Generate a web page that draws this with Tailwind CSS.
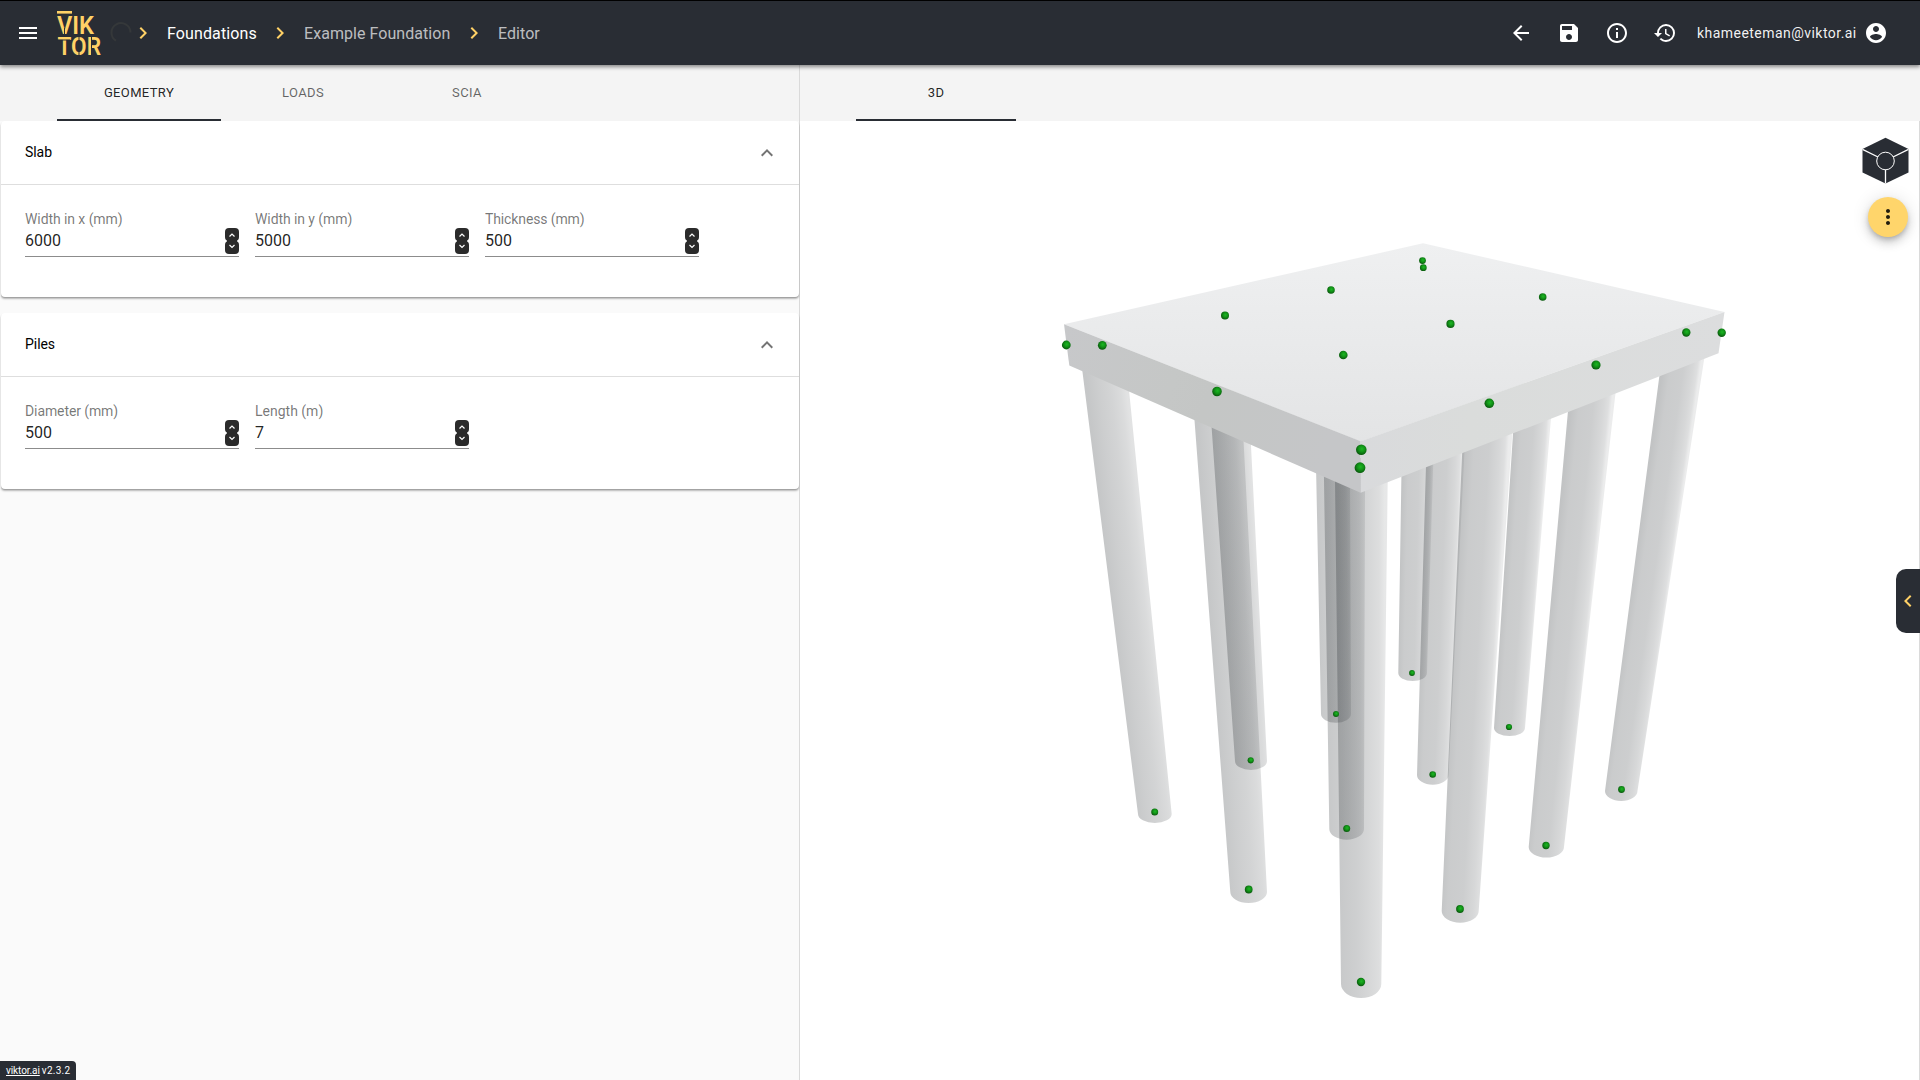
<!DOCTYPE html>
<html lang="en">
<head>
<meta charset="utf-8">
<title>VIKTOR - Editor</title>
<script src="https://cdn.jsdelivr.net/npm/@tailwindcss/browser@4"></script>
</head>
<body class="relative flex h-screen w-screen flex-col overflow-hidden bg-[#fafafa] font-['Roboto',sans-serif] text-black/87">

<svg class="hidden">
  <symbol id="chevron" viewBox="0 0 24 24"><path d="M10 6 8.59 7.41 13.17 12l-4.58 4.59L10 18l6-6z" fill="currentColor"/></symbol>
  <symbol id="expand" viewBox="0 0 24 24"><path d="m12 8-6 6 1.41 1.41L12 10.83l4.59 4.58L18 14z" fill="currentColor"/></symbol>
  <symbol id="spin" viewBox="0 0 14 26">
    <rect x="2" y="12" width="10" height="2" fill="#212121"/>
    <rect x="0" y="0" width="14" height="13" rx="4" fill="#2b2b2b"/>
    <rect x="0" y="13" width="14" height="13" rx="4" fill="#2b2b2b"/>
    <path d="M4.5 8.500 7 6l2.500 2.500M4.500 17 7 19.500 9.500 17" fill="none" stroke="#fff" stroke-width="1.200"/>
  </symbol>
</svg>

<header class="relative z-10 flex h-[65px] shrink-0 items-center border-t border-black bg-[#292d34] pl-4 pr-8 text-white shadow-[0_2px_4px_rgba(0,0,0,0.45)]">
  <svg class="size-6" viewBox="0 0 24 24" fill="currentColor"><path d="M3 18h18v-2H3zm0-5h18v-2H3zm0-7v2h18V6z"/></svg>
  <svg class="ml-4 h-[48px] w-12 overflow-visible" viewBox="0 0 48 48" fill="#ffd166" font-family="Roboto, sans-serif" font-weight="600" font-size="26.5">
    <rect x="1" y="2" width="15" height="2.600"/>
    <text x="1" y="25" textLength="37" lengthAdjust="spacingAndGlyphs">VIK</text>
    <text x="1.500" y="46" textLength="43.500" lengthAdjust="spacingAndGlyphs">TOR</text>
    <path d="M8.500 19v7M1 31h13M23 26v21M35.500 26v21" stroke="#292d34" stroke-width="1" fill="none"/>
  </svg>
  <svg class="ml-1.5 size-[22px]" viewBox="0 0 22 22"><path d="M6 18.700A9.500 9.500 0 1 1 20.500 10.500" fill="none" stroke="#35383a" stroke-width="2"/></svg>
  <nav class="flex items-center text-base">
    <svg class="-ml-px size-6 text-[#ffd166]"><use href="#chevron"/></svg>
    <span class="ml-3 w-[89px] whitespace-nowrap pt-0.5 tracking-[0.12px]">Foundations</span>
    <svg class="ml-3 size-6 text-[#ffd166]"><use href="#chevron"/></svg>
    <span class="ml-3 w-[146px] whitespace-nowrap pt-0.5 tracking-[0.05px] text-white/70">Example Foundation</span>
    <svg class="ml-3 size-6 text-[#ffd166]"><use href="#chevron"/></svg>
    <span class="ml-3 pt-0.5 tracking-[0.05px] text-white/70">Editor</span>
  </nav>
  <div class="ml-auto flex items-center gap-6">
    <svg class="size-6" viewBox="0 0 24 24" fill="currentColor"><path d="M20 11H7.83l5.59-5.59L12 4l-8 8 8 8 1.41-1.41L7.83 13H20z"/></svg>
    <svg class="size-6" viewBox="0 0 24 24" fill="currentColor"><path d="M17 3H5c-1.11 0-2 .9-2 2v14c0 1.1.89 2 2 2h14c1.1 0 2-.9 2-2V7zm-5 16c-1.66 0-3-1.34-3-3s1.34-3 3-3 3 1.34 3 3-1.34 3-3 3m3-10H5V5h10z"/></svg>
    <svg class="size-6" viewBox="0 0 24 24" fill="currentColor"><path d="M11 7h2v2h-2zm0 4h2v6h-2zm1-9C6.48 2 2 6.48 2 12s4.48 10 10 10 10-4.48 10-10S17.52 2 12 2m0 18c-4.41 0-8-3.59-8-8s3.59-8 8-8 8 3.59 8 8-3.59 8-8 8"/></svg>
    <svg class="size-6" viewBox="0 0 24 24" fill="currentColor"><g transform="translate(-.5)"><path d="M13.5 3a9 9 0 0 0-9 9h-3l3.9 3.9.1.1 4-4h-3c0-3.87 3.13-7 7-7s7 3.13 7 7-3.13 7-7 7c-1.93 0-3.68-.79-4.94-2.06l-1.42 1.42A8.95 8.95 0 0 0 13.5 21a9 9 0 0 0 0-18m-1 5v5l4.25 2.52.77-1.28-3.52-2.09V8z"/></g></svg>
    <div class="-ml-1 flex items-center">
      <span class="w-[167px] whitespace-nowrap text-sm tracking-[0.46px] text-white/95">khameeteman@viktor.ai</span>
      <svg class="size-6" viewBox="0 0 24 24" fill="currentColor"><path d="M12 2C6.48 2 2 6.48 2 12s4.48 10 10 10 10-4.48 10-10S17.52 2 12 2m0 3c1.66 0 3 1.34 3 3s-1.34 3-3 3-3-1.34-3-3 1.34-3 3-3m0 14.2c-2.5 0-4.71-1.28-6-3.22.03-1.99 4-3.08 6-3.08 1.99 0 5.97 1.09 6 3.08-1.29 1.94-3.5 3.22-6 3.22"/></svg>
    </div>
  </div>
</header>

<div class="flex min-h-0 flex-1">
  <section class="flex w-[800px] shrink-0 flex-col border-r border-[#dadada]">
    <div class="flex h-14 shrink-0 bg-[#f4f4f4] pl-[57px] text-[13px] tracking-[0.36px]">
      <div class="flex w-[164px] items-center justify-center border-b-2 border-[#292d34] pt-0.5">GEOMETRY</div>
      <div class="flex w-[164px] items-center justify-center border-b-2 border-transparent pt-0.5 text-black/60">LOADS</div>
      <div class="flex w-[164px] items-center justify-center border-b-2 border-transparent pt-0.5 text-black/60">SCIA</div>
    </div>
    <div class="flex flex-col gap-4 pl-px">
      <div class="h-44 rounded bg-white shadow-[0_2px_2px_rgba(0,0,0,0.26),0_1px_1px_rgba(0,0,0,0.15)]">
        <div class="flex h-16 items-center justify-between border-b border-[#dedede] px-6 pr-5 text-sm text-black"><span class="pb-0.5 tracking-[-0.05px]">Slab</span><svg class="size-6 text-black/55"><use href="#expand"/></svg></div>
        <div class="flex gap-4 px-6 pt-6">
          <div class="relative h-12 w-[214px] border-b border-[#8c8c8c]"><div class="text-sm leading-5 tracking-[-0.08px] text-black/54">Width in x (mm)</div><div class="text-base leading-6">6000</div><svg class="absolute bottom-0.5 right-0 h-[26px] w-3.5"><use href="#spin"/></svg></div>
          <div class="relative h-12 w-[214px] border-b border-[#8c8c8c]"><div class="text-sm leading-5 tracking-[-0.08px] text-black/54">Width in y (mm)</div><div class="text-base leading-6">5000</div><svg class="absolute bottom-0.5 right-0 h-[26px] w-3.5"><use href="#spin"/></svg></div>
          <div class="relative h-12 w-[214px] border-b border-[#8c8c8c]"><div class="text-sm leading-5 tracking-[-0.12px] text-black/54">Thickness (mm)</div><div class="text-base leading-6">500</div><svg class="absolute bottom-0.5 right-0 h-[26px] w-3.5"><use href="#spin"/></svg></div>
        </div>
      </div>
      <div class="h-44 rounded bg-white shadow-[0_2px_2px_rgba(0,0,0,0.26),0_1px_1px_rgba(0,0,0,0.15)]">
        <div class="flex h-16 items-center justify-between border-b border-[#dedede] px-6 pr-5 text-sm text-black"><span class="pb-0.5 tracking-[-0.05px]">Piles</span><svg class="size-6 text-black/55"><use href="#expand"/></svg></div>
        <div class="flex gap-4 px-6 pt-6">
          <div class="relative h-12 w-[214px] border-b border-[#8c8c8c]"><div class="text-sm leading-5 tracking-[-0.1px] text-black/54">Diameter (mm)</div><div class="text-base leading-6">500</div><svg class="absolute bottom-0.5 right-0 h-[26px] w-3.5"><use href="#spin"/></svg></div>
          <div class="relative h-12 w-[214px] border-b border-[#8c8c8c]"><div class="text-sm leading-5 text-black/54">Length (m)</div><div class="text-base leading-6">7</div><svg class="absolute bottom-0.5 right-0 h-[26px] w-3.5"><use href="#spin"/></svg></div>
        </div>
      </div>
    </div>
  </section>

  <section class="flex flex-1 flex-col">
    <div class="flex h-14 shrink-0 bg-[#f4f4f4] pl-14 text-[13px] tracking-[0.36px]">
      <div class="flex w-40 items-center justify-center border-b-2 border-[#292d34] pt-0.5">3D</div>
    </div>
    <div class="relative flex-1 border-r border-[#dadada] bg-white">
      <svg id="scene" class="block h-[959px] w-[1119px]" viewBox="800 121 1119 959">
        <defs>
          <linearGradient id="top" x1="0" y1="0" x2="0" y2="1"><stop offset="0" stop-color="#eff0f1"/><stop offset="1" stop-color="#e3e4e5"/></linearGradient>
          <linearGradient id="front" x1="0" x2="1" y1="0" y2="0.2"><stop offset="0" stop-color="#c7c8ca"/><stop offset=".42" stop-color="#c5c7c6"/><stop offset=".55" stop-color="#c4c6c5"/><stop offset="1" stop-color="#c5c6c8"/></linearGradient>
          <linearGradient id="side"><stop offset="0" stop-color="#d9dadc"/><stop offset=".3" stop-color="#dadcdb"/><stop offset="1" stop-color="#dcddde"/></linearGradient>
          <radialGradient id="ball" cx=".55" cy=".42" r=".62"><stop offset="0" stop-color="#1db823"/><stop offset=".45" stop-color="#129418"/><stop offset="1" stop-color="#084f0b"/></radialGradient>
        </defs>
        <g id="piles"></g>
        <path d="M1064 324.300 1423 243.300 1724.500 312 1360.700 441.500z" fill="url(#top)"/>
        <path d="M1064 324.300 1360.700 441.300V492.800L1069.300 365.500z" fill="url(#front)"/>
        <path d="M1360.700 441.300 1724.500 312 1718.500 353.300 1360.700 492.800z" fill="url(#side)"/>
        <g id="nodes" fill="url(#ball)"></g>
      </svg>

      <div class="absolute right-[11px] top-4 flex flex-col items-end gap-[13px]">
        <svg class="-mr-px h-[47px] w-[47px]" viewBox="0 0 47 47"><path d="M23.500.8 46.500 12v23.500L23.500 46.500.5 35.500V12z" fill="#292d34"/><path d="M.5 12.300 16 20M46.500 12.300 31 20M23.500 32.500v14" stroke="#fff" stroke-width="1.300"/><circle cx="23.500" cy="24" r="8.800" fill="none" stroke="#fff" stroke-width="1"/></svg>
        <button class="flex size-10 items-center justify-center rounded-full bg-[#ffd56b] text-black/87 shadow-[0_3px_5px_-1px_rgba(0,0,0,0.2),0_6px_10px_rgba(0,0,0,0.14),0_1px_18px_rgba(0,0,0,0.12)]">
          <svg class="size-6" viewBox="0 0 24 24" fill="currentColor"><path d="M12 8c1.100 0 2-.9 2-2s-.9-2-2-2-2 .9-2 2 .9 2 2 2m0 2c-1.100 0-2 .9-2 2s.9 2 2 2 2-.9 2-2-.9-2-2-2m0 6c-1.100 0-2 .9-2 2s.9 2 2 2 2-.9 2-2-.9-2-2-2"/></svg>
        </button>
      </div>
      <div class="absolute -right-px top-[448px] flex h-16 w-6 items-center justify-center rounded-l-[10px] bg-[#292d34]">
        <svg class="size-6 shrink-0 rotate-180 text-[#ffd166]"><use href="#chevron"/></svg>
      </div>
    </div>
  </section>
</div>

<div class="absolute bottom-0 left-0 flex h-[19px] w-[76px] items-center gap-0.5 rounded-tr bg-[#292d34] pl-1.5 text-[10px] text-white"><span class="tracking-[-0.08px] underline">viktor.ai</span><span class="tracking-[0.25px]">v2.3.2</span></div>

<script>
// Pile outline: [left x, right x, y] near the slab, [left x, right x, y] at the foot, lowest y, shading
const piles = [
  [1401.5,1433,470, 1398.3,1427,673, 681,'r'],
  [1316.3,1350,480, 1321,1351,714, 722.7,'c'],
  [1212.5,1250.7,440, 1235,1267,761, 770,'l'],
  [1426,1463.8,465, 1417,1448.5,775, 784.7,'r'],
  [1514,1551,418, 1494,1525,728, 736,'r'],
  [1324,1365,480, 1329.3,1364,829, 839.7,'c'],
  [1083.5,1128,380, 1138,1171.7,814, 823,'l'],
  [1196,1243.5,440, 1230.3,1267,892, 903,'l'],
  [1462.3,1511.2,450, 1441.7,1478.7,911, 922.7,'r'],
  [1568.8,1614.5,402, 1528.7,1564,847, 857.5,'r'],
  [1659.5,1701.7,375, 1605,1637.5,791, 801,'r'],
  [1335,1387.7,480, 1341,1381.3,984, 998,'c'],
];
const shades = {
  l: [[0,.235],[.3,.205],[.6,.18],[.85,.15],[1,.12]],
  c: [[0,.23],[.4,.2],[.65,.17],[.88,.14],[1,.1]],
  r: [[0,.25],[.2,.215],[.55,.205],[.8,.165],[.92,.135],[1,.08]],
};
document.getElementById('piles').innerHTML = piles.map(([l1,r1,y1,l2,r2,y2,yb,s], i) => {
  const up = 22, k = up / (y2 - y1);
  const lt = l1 - (l2 - l1) * k, rt = r1 - (r2 - r1) * k, yt = y1 - up;
  const ym = (y1 + y2) / 2, skew = ((l2 + r2) - (l1 + r1)) / 2 / (y2 - y1);
  const stops = shades[s].map(([o,a]) => `<stop offset="${o}" stop-color="#0a1014" stop-opacity="${a}"/>`).join('');
  return `<linearGradient id="p${i}" gradientUnits="userSpaceOnUse" x1="${(l1+l2)/2}" x2="${(r1+r2)/2}" y1="${ym}" y2="${ym}" gradientTransform="matrix(1 0 ${skew} 1 ${-skew*ym} 0) translate(${-(l1+r1+l2+r2)/4 + (l1+r1+l2+r2)/4} 0)">${stops}</linearGradient>
  <path fill="url(#p${i})" d="M${lt} ${yt}L${rt} ${yt}L${r2} ${y2}A${(r2-l2)/2} ${yb-y2} 0 0 1 ${l2} ${y2}z"/>`;
}).join('');

const nodes = [
  [1066.3,345,4.4],[1102.3,345.3,4.4],[1217,391.5,4.8],[1361.3,449.7,5.3],[1360,467.7,5.4],
  [1225,315.6,4],[1331,290,3.8],[1343.3,355,4.3],[1422.5,260.6,3.4],[1423.3,267.7,3.4],
  [1542.7,297,3.8],[1450.5,323.9,4.1],[1489.3,403.3,4.8],[1596,365,4.6],[1686.3,332.5,4.2],[1721.7,332.7,4.2],
  [1336,714,3],[1250.7,760.3,3.1],[1412,673,2.9],[1509,727,3.1],[1154.7,812,3.5],[1346.7,828.5,3.5],
  [1248.7,889.5,3.9],[1432.7,774.5,3.3],[1460,909,3.9],[1546,845.5,3.7],[1361,982,4.2],[1621.5,789.5,3.4],
];
document.getElementById('nodes').innerHTML = nodes.map(([x,y,r]) => `<circle cx="${x}" cy="${y}" r="${r}"/>`).join('');
</script>
</body>
</html>
